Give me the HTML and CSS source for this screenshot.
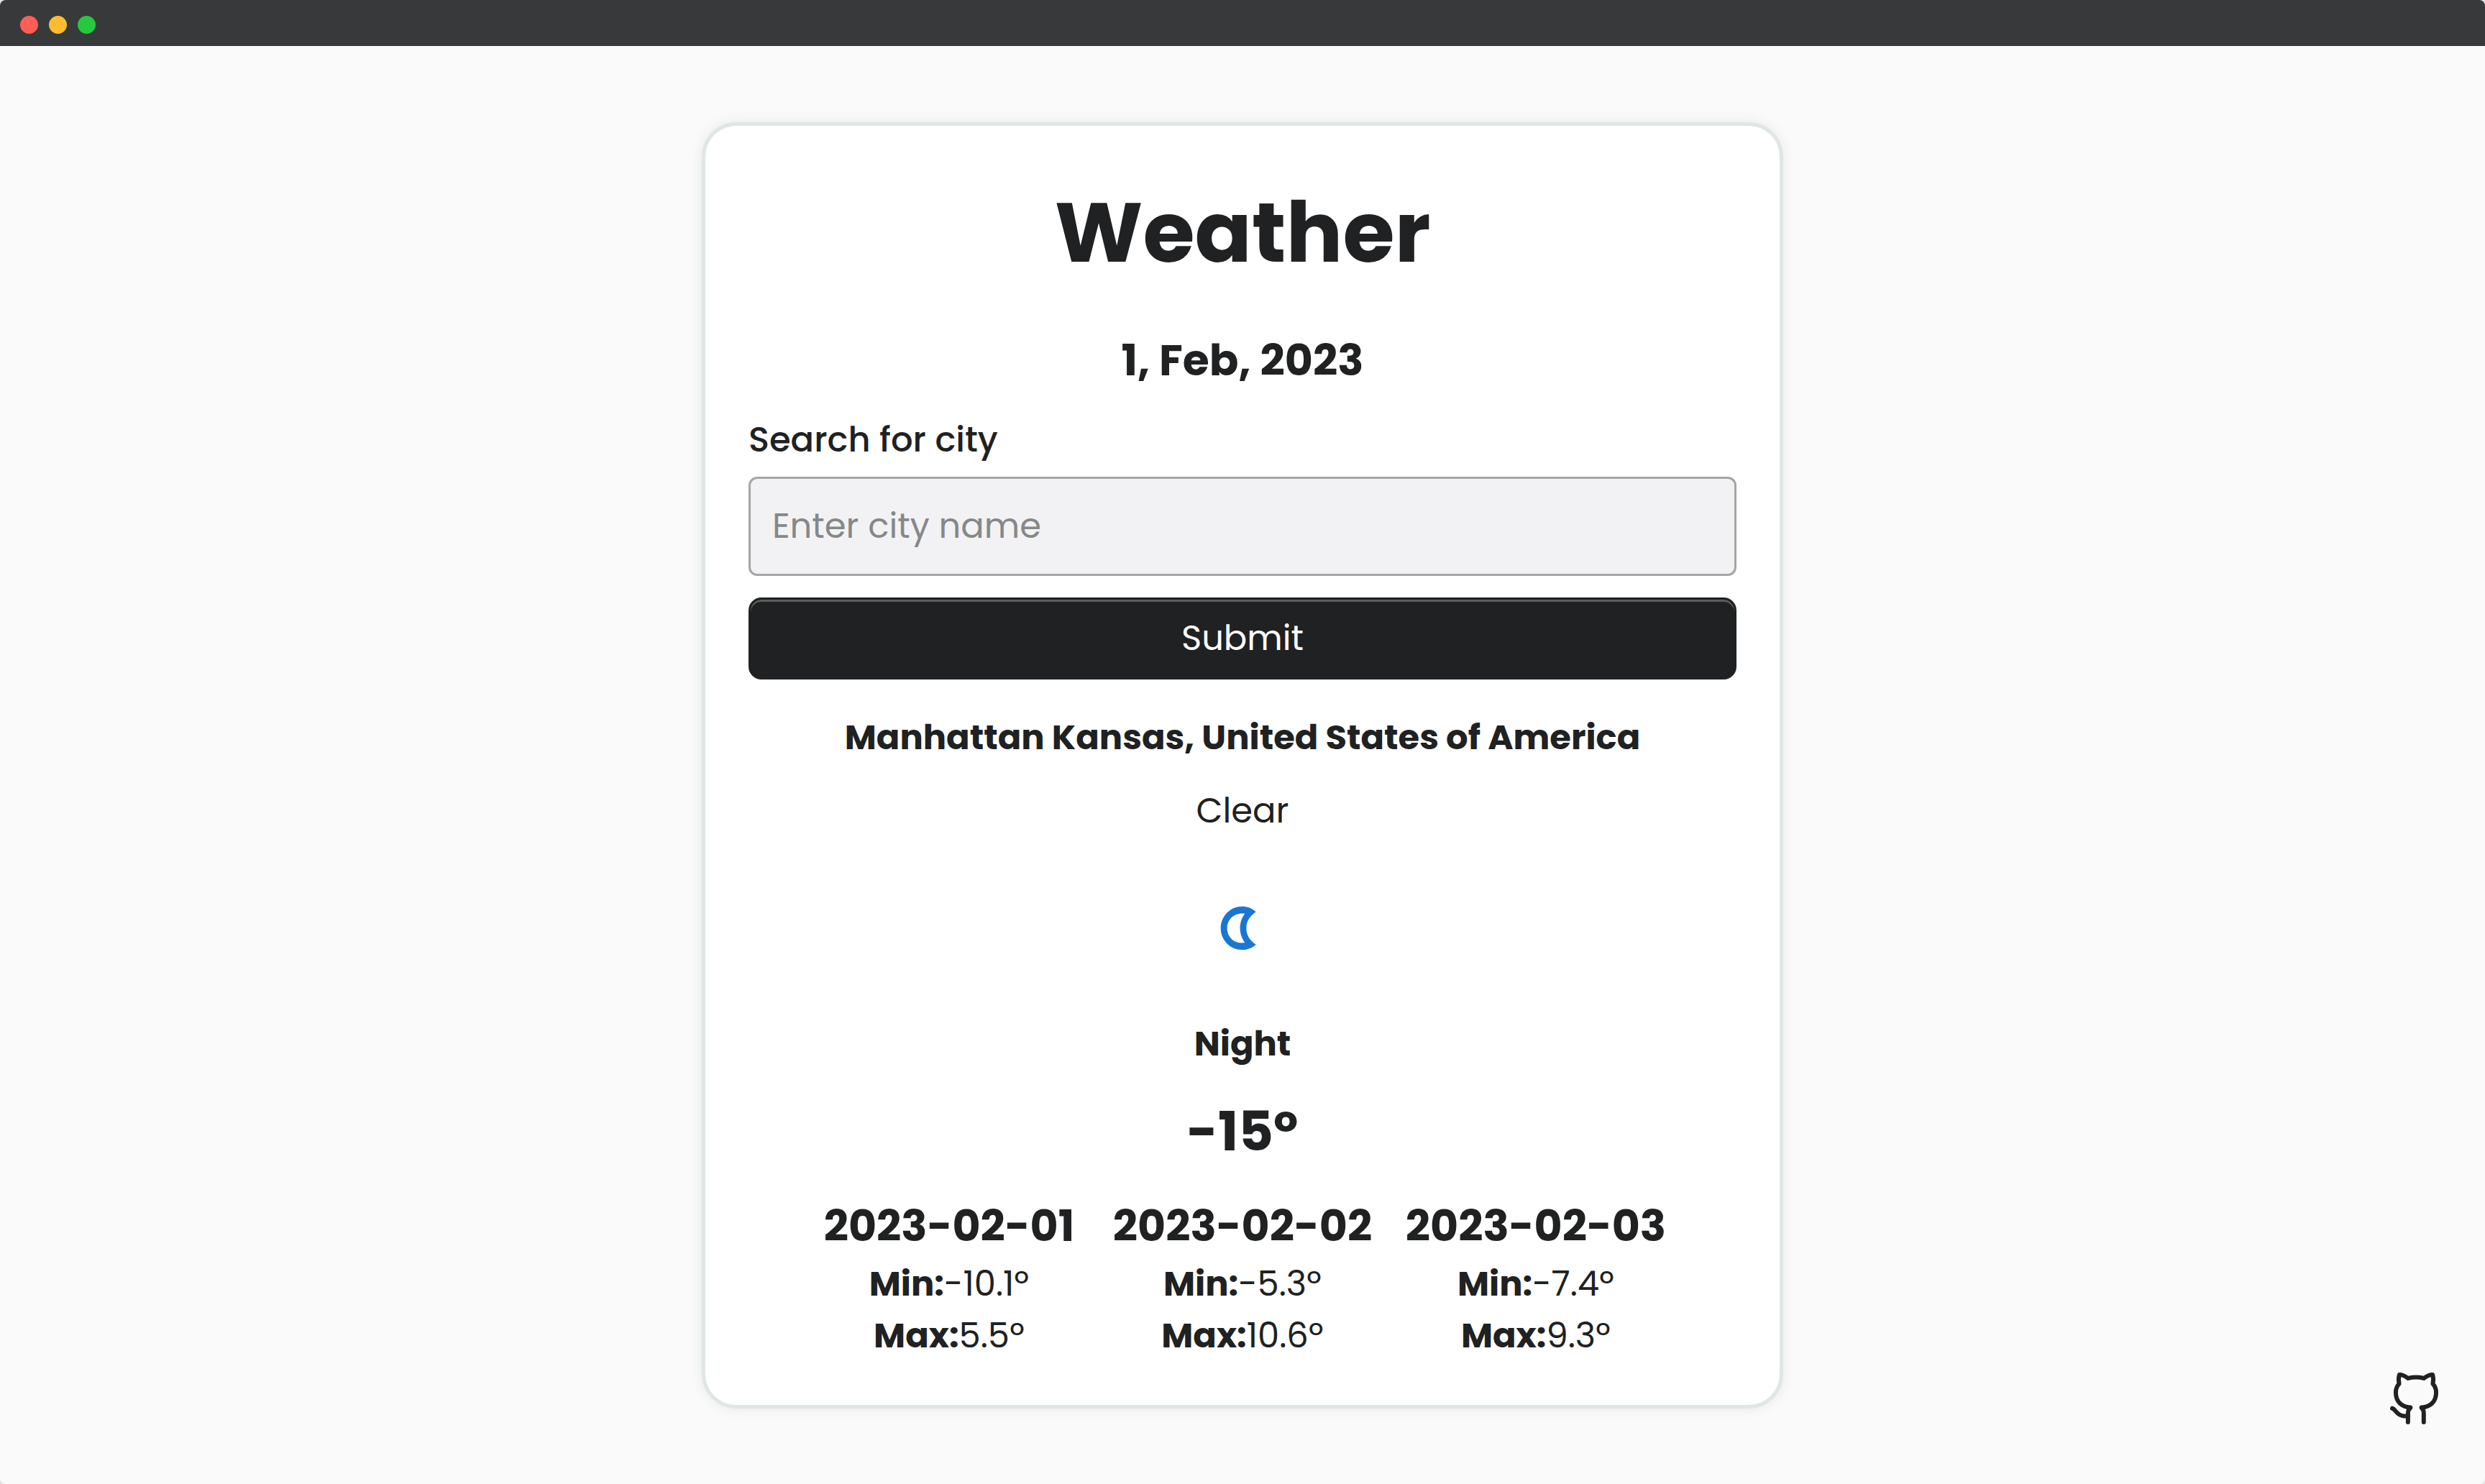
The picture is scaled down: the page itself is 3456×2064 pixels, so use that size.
FILE: index.html
```html
<!DOCTYPE html>
<html lang="en">
<head>
  <meta charset="utf-8">
  <meta name="viewport" content="width=device-width, initial-scale=1">
  <title>Weather</title>
  <link rel="stylesheet" href="styles.css">
</head>
<body>
  <div class="window">
    <header class="titlebar">
      <span class="dot dot-close"></span>
      <span class="dot dot-minimize"></span>
      <span class="dot dot-zoom"></span>
    </header>
    <main class="page">
      <section class="card">
        <h1 class="title">Weather</h1>
        <h2 class="today">1, Feb, 2023</h2>
        <form class="search">
          <label class="search-label" for="city">Search for city</label>
          <input class="search-input" id="city" name="city" type="text" placeholder="Enter city name">
          <button class="search-button" type="submit">Submit</button>
        </form>
        <h3 class="line place">Manhattan Kansas, United States of America</h3>
        <p class="line">Clear</p>
        <svg class="moon" viewBox="96 -24 576 576" role="img" aria-label="Clear night">
          <path fill="#1976d2" fill-rule="evenodd" d="M440 199C424 183 404 176 382 176C333 176 293 217 293 267C293 317 333 357 382 357C404 357 424 350 440 335C414 318 400 295 400 267C400 239 414 216 440 199ZM394 206C352 200 320 228 320 267C320 306 352 335 394 327C367 292 367 241 394 206Z"/>
        </svg>
        <p class="line strong">Night</p>
        <p class="temperature">-15º</p>
        <div class="forecast">
          <article class="day">
            <h4 class="day-date">2023-02-01</h4>
            <p class="line"><b>Min:</b>-10.1º</p>
            <p class="line"><b>Max:</b>5.5º</p>
          </article>
          <article class="day">
            <h4 class="day-date">2023-02-02</h4>
            <p class="line"><b>Min:</b>-5.3º</p>
            <p class="line"><b>Max:</b>10.6º</p>
          </article>
          <article class="day">
            <h4 class="day-date">2023-02-03</h4>
            <p class="line"><b>Min:</b>-7.4º</p>
            <p class="line"><b>Max:</b>9.3º</p>
          </article>
        </div>
      </section>
    </main>
    <a class="github" href="#" aria-label="GitHub">
      <svg class="github-icon" viewBox="130 125 230 235" fill="none" stroke="currentColor" stroke-width="18" stroke-linecap="round" stroke-linejoin="round">
        <path d="M229 281C190 277 168 255 168 217C168 200 174 190 182 181C179 168 179 155 183 143C195 142 206 148 220 158C240 153 265 153 285 158C299 148 310 142 322 143C326 155 326 168 323 181C331 190 337 200 337 217C337 255 315 277 276 281"/>
        <path d="M229 281C222 288 219 295 219 305V342M276 281C283 288 285 295 285 305V342"/>
        <path d="M153 284C167 287 172 316 202 316H219"/>
      </svg>
    </a>
  </div>
</body>
</html>
```
FILE: styles.css
```css
* {
  box-sizing: border-box;
}

body {
  margin: 0;
  background: #e4e4e4;
  color: #202122;
  font-family: Poppins, Inter, "Open Sans", sans-serif;
  font-size: 48px;
  line-height: 72px;
}

h1, h2, h3, h4, p {
  margin: 0;
}

.window {
  display: flex;
  flex-direction: column;
  min-height: 100vh;
  overflow: hidden;
  border-radius: 8px;
  background: #fafafa;
}

.titlebar {
  display: flex;
  align-items: center;
  gap: 15px;
  height: 64px;
  padding: 4px 28px 0;
  background: #38393b;
}

.dot {
  width: 25px;
  height: 25px;
  border-radius: 50%;
}

.dot-close {
  background: #ff5d55;
}

.dot-minimize {
  background: #ffbc30;
}

.dot-zoom {
  background: #26c840;
}

.page {
  display: flex;
  flex: 1;
  align-items: center;
  justify-content: center;
}

.card {
  display: flex;
  flex-direction: column;
  gap: 30px;
  width: 100%;
  max-width: 1504px;
  padding: 60px;
  border: 5px solid #e0e6e6;
  border-radius: 48px;
  background: #fff;
  box-shadow: 0 0 18px rgba(0, 0, 0, 0.08);
  text-align: center;
}

.title {
  margin-bottom: 15px;
  font-size: 117px;
  font-weight: 700;
  line-height: 176px;
}

.today,
.day-date {
  font-size: 60px;
  font-weight: 700;
  line-height: 90px;
}

.search {
  display: flex;
  flex-direction: column;
  margin-bottom: 15px;
}

.search-label {
  margin-bottom: 15px;
  font-weight: 500;
  text-align: left;
}

.search-input {
  height: 138px;
  margin-bottom: 30px;
  padding: 0 30px;
  border: 3px solid #a5a5a5;
  border-radius: 12px;
  background: #f2f2f5;
  color: inherit;
  font: inherit;
}

.search-input::placeholder {
  color: #868887;
  opacity: 1;
}

.search-button {
  height: 114px;
  padding: 0;
  border: 3px solid #202122;
  border-radius: 18px;
  background: #202122;
  box-shadow: inset 0 3px #5b5d5d, 0 2px 2px rgba(0, 0, 0, 0.05);
  color: #fff;
  font: inherit;
}

.place,
.strong,
.line b {
  font-weight: 700;
}

.place {
  font-size: inherit;
}

.moon {
  align-self: center;
  width: 192px;
  height: 192px;
}

.temperature {
  font-size: 75px;
  font-weight: 700;
  line-height: 112px;
}

.forecast {
  display: grid;
  grid-template-columns: repeat(3, 1fr);
  gap: 30px;
  padding: 0 90px;
}

.day-date {
  white-space: nowrap;
}

.github {
  position: fixed;
  right: 60px;
  bottom: 80px;
  color: #202122;
  line-height: 0;
}

.github-icon {
  width: 77px;
  height: 78px;
}
```
